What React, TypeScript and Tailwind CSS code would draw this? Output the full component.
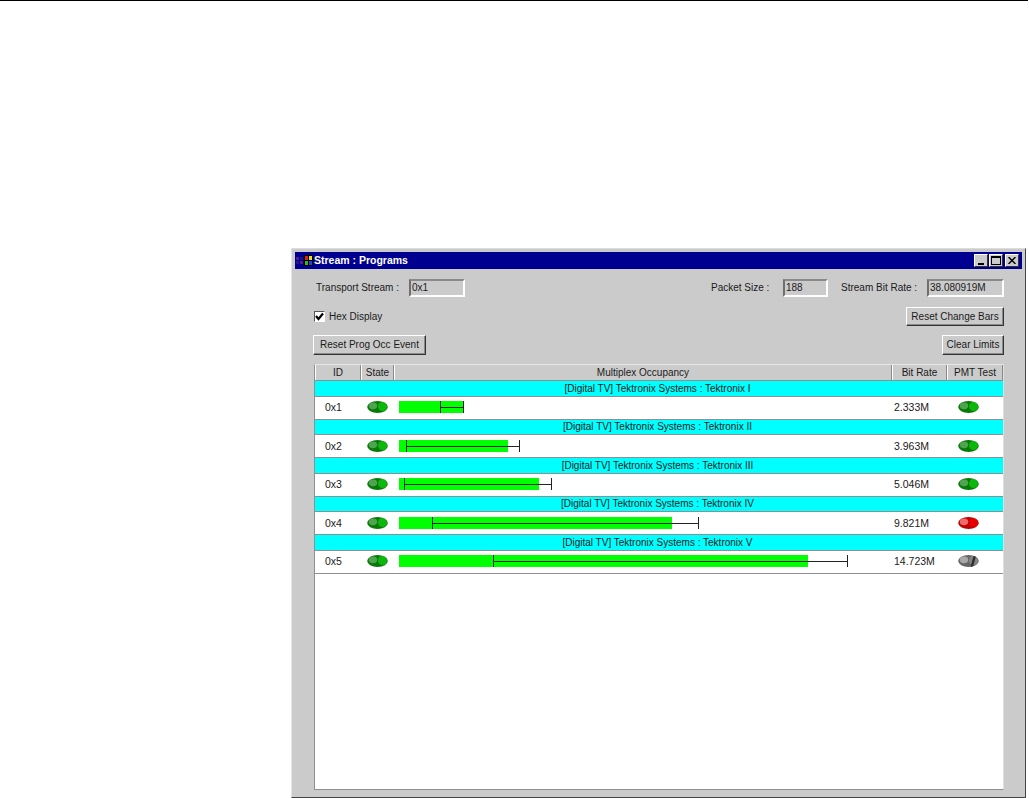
import { ReactNode } from "react";

const columns = "grid grid-cols-[46px_33px_498px_55px_56px]";

interface Program {
  id: string;
  name: string;
  rate: string;
  pmt: "green" | "red" | "gray";
  bar: number;
  lineFrom: number;
  lineTo: number;
  bandH: string;
  rowPad: string;
}

// bar and line numbers are pixels from the left of the occupancy column
const programs: Program[] = [
  { id: "0x1", name: "Tektronix I", rate: "2.333M", pmt: "green", bar: 65, lineFrom: 41, lineTo: 65, bandH: "h-[16px]", rowPad: "pt-[4px]" },
  { id: "0x2", name: "Tektronix II", rate: "3.963M", pmt: "green", bar: 109, lineFrom: 7, lineTo: 121, bandH: "h-[15px]", rowPad: "pt-[5px]" },
  { id: "0x3", name: "Tektronix III", rate: "5.046M", pmt: "green", bar: 140, lineFrom: 5, lineTo: 153, bandH: "h-[16px]", rowPad: "pt-[4px]" },
  { id: "0x4", name: "Tektronix IV", rate: "9.821M", pmt: "red", bar: 273, lineFrom: 33, lineTo: 300, bandH: "h-[15px]", rowPad: "pt-[5px]" },
  { id: "0x5", name: "Tektronix V", rate: "14.723M", pmt: "gray", bar: 409, lineFrom: 94, lineTo: 449, bandH: "h-[16px]", rowPad: "pt-[4px]" },
];

const ledColors = {
  green: { base: "#087a08", bright: "#0cb80c", light: "#4fa54f" },
  red: { base: "#c00000", bright: "#e60000", light: "#ee6a6a" },
  gray: { base: "#666666", bright: "#858585", light: "#a8a8a8" },
};

function Led({ color, uid }: { color: "green" | "red" | "gray"; uid: string }) {
  const c = ledColors[color];
  return (
    <svg width="21" height="12" viewBox="0 0 21 12" className="block">
      <defs>
        <filter id={`soft-${uid}`} x="-30%" y="-30%" width="160%" height="160%">
          <feGaussianBlur stdDeviation="0.7" />
        </filter>
        <clipPath id={`clip-${uid}`}>
          <ellipse cx="10.5" cy="6" rx="10.3" ry="5.9" />
        </clipPath>
      </defs>
      <g clipPath={`url(#clip-${uid})`}>
        <rect width="21" height="12" fill={c.base} />
        <g filter={`url(#soft-${uid})`}>
          <ellipse cx="15.5" cy="5.5" rx="4.5" ry="4.5" fill={c.bright} />
          <ellipse cx="6" cy="4.8" rx="4.2" ry="3.4" fill={c.light} />
        </g>
        {color === "gray" && <path d="M12.5 12 L15.5 1 L18 1 L15 12 Z" fill="#2e2e2e" />}
      </g>
    </svg>
  );
}

function Button({ children, className }: { children: ReactNode; className: string }) {
  return (
    <div
      className={`flex items-center justify-center border border-t-white border-l-white border-r-[#333] border-b-[#333] bg-[#cbcbcb] shadow-[inset_-1px_-1px_0_#8a8a8a] ${className}`}
    >
      {children}
    </div>
  );
}

function Field({ value, className }: { value: string; className: string }) {
  return (
    <div
      className={`flex h-[18px] items-center border-2 border-t-[#8a8a8a] border-l-[#6e6e6e] border-r-white border-b-white pl-[1px] ${className}`}
    >
      {value}
    </div>
  );
}

function HeaderCell({ children }: { children: ReactNode }) {
  return (
    <div className="flex h-[15px] items-center justify-center border-r border-r-[#8a8a8a] border-l border-l-white">
      {children}
    </div>
  );
}

function TitleButton({ children }: { children: ReactNode }) {
  return (
    <div className="flex h-[13px] w-[14px] items-center justify-center border border-t-white border-l-white border-r-[#333] border-b-[#333] bg-[#cbcbcb]">
      {children}
    </div>
  );
}

function AppIcon() {
  return (
    <svg width="17" height="11" viewBox="0 0 17 11" className="block">
      <rect x="0" y="2" width="3" height="3" fill="#5a1a8a" />
      <rect x="4" y="2" width="3" height="3" fill="#1a1a6a" />
      <rect x="0" y="6" width="3" height="3" fill="#1a1a8a" />
      <rect x="4" y="6" width="3" height="3" fill="#6a1a6a" />
      <rect x="8" y="0" width="9" height="11" fill="#000" />
      <rect x="9" y="1" width="3" height="4" fill="#e02020" />
      <rect x="13" y="1" width="3" height="4" fill="#e8e020" />
      <rect x="9" y="6" width="3" height="4" fill="#20c020" />
      <rect x="13" y="6" width="3" height="4" fill="#2040e0" />
    </svg>
  );
}

function OccupancyBar({ program }: { program: Program }) {
  return (
    <div className="relative ml-[5px] h-[12px]">
      <div className="h-full bg-[#00ff00]" style={{ width: program.bar }} />
      <div
        className="absolute top-0 h-full border-x border-x-[#222]"
        style={{ left: program.lineFrom, width: program.lineTo - program.lineFrom }}
      >
        <div className="mt-[6px] h-px bg-[#222]" />
      </div>
    </div>
  );
}

export default function App() {
  return (
    <div className="h-[798px] w-[1029px] overflow-hidden bg-white font-['Liberation_Sans',Arial,sans-serif] text-[10px] leading-none text-[#1a1a1a]">
      <div className="h-px w-[1028px] bg-black" />
      <div className="ml-[291px] mt-[247px] flex h-[550px] w-[735px] flex-col border border-t-[#dcdcdc] border-l-[#e4e4e4] border-r-[#444] border-b-[#444] bg-[#cbcbcb] px-[3px] pt-[3px]">
        <div className="flex h-[17px] items-center bg-[#000090] pl-[1px] pr-[3px]">
          <AppIcon />
          <span className="ml-[1px] text-[10.5px] font-bold text-white">Stream : Programs</span>
          <div className="ml-auto flex">
            <TitleButton>
              <div className="mt-[6px] h-[2px] w-[6px] bg-black" />
            </TitleButton>
            <div className="ml-[1px]">
              <TitleButton>
                <div className="h-[9px] w-[10px] border border-t-2 border-black" />
              </TitleButton>
            </div>
            <div className="ml-[2px]">
              <TitleButton>
                <svg width="8" height="7" viewBox="0 0 8 7">
                  <path d="M0.5 0 L7.5 7 M7.5 0 L0.5 7" stroke="#000" strokeWidth="1.4" />
                </svg>
              </TitleButton>
            </div>
          </div>
        </div>

        <div className="mx-[18px] mt-[10px] flex flex-1 flex-col">
          <div className="flex items-center">
            <span className="ml-[3px] w-[93px]">Transport Stream :</span>
            <Field value="0x1" className="w-[56px]" />
            <span className="ml-[246px] w-[72px]">Packet Size :</span>
            <Field value="188" className="w-[45px]" />
            <span className="ml-[13px] w-[86px]">Stream Bit Rate :</span>
            <Field value="38.080919M" className="w-[77px]" />
          </div>

          <div className="mt-[10px] flex h-[19px] items-center">
            <div className="ml-[1px] flex h-[11px] w-[11px] items-center justify-center border border-t-[#555] border-l-[#555] border-r-white border-b-white bg-white">
              <svg width="9" height="9" viewBox="0 0 9 9">
                <path d="M1 4 L3.5 7 L8 1.5" fill="none" stroke="#000" strokeWidth="2.2" />
              </svg>
            </div>
            <span className="ml-[4px]">Hex Display</span>
            <Button className="ml-auto h-[19px] w-[98px]">Reset Change Bars</Button>
          </div>

          <div className="mt-[9px] flex h-[20px] items-center">
            <Button className="h-[20px] w-[113px]">Reset Prog Occ Event</Button>
            <Button className="ml-auto h-[20px] w-[62px]">Clear Limits</Button>
          </div>

          <div className="ml-[1px] mt-[9px] h-[426px] w-[690px] border border-[#8f8f8f] border-t-[#e6e6e6] border-r-[#dedede] bg-white">
            <div className={`${columns} bg-[#cbcbcb]`}>
              <HeaderCell>ID</HeaderCell>
              <HeaderCell>State</HeaderCell>
              <HeaderCell>Multiplex Occupancy</HeaderCell>
              <HeaderCell>Bit Rate</HeaderCell>
              <HeaderCell>PMT Test</HeaderCell>
            </div>
            <div className="border-b border-b-[#8f8f8f]">
              {programs.map((p) => (
                <div key={p.id}>
                  <div className={`flex items-center justify-center border-t border-t-[#8f8f8f] bg-[#00ffff] pr-[3px] ${p.bandH}`}>
                    [Digital TV] Tektronix Systems : {p.name}
                  </div>
                  <div className={`${columns} h-[23px] items-start border-t border-t-[#8f8f8f] ${p.rowPad}`}>
                    <div className="flex h-[12px] items-center pl-[10px] text-[10.5px]">{p.id}</div>
                    <div className="flex h-[12px] items-center pl-[6px]">
                      <Led color="green" uid={`state-${p.id}`} />
                    </div>
                    <OccupancyBar program={p} />
                    <div className="flex h-[12px] items-center pl-[2px] text-[10.5px]">{p.rate}</div>
                    <div className="flex h-[12px] items-center pl-[11px]">
                      <Led color={p.pmt} uid={`pmt-${p.id}`} />
                    </div>
                  </div>
                </div>
              ))}
            </div>
          </div>
        </div>
      </div>
    </div>
  );
}
